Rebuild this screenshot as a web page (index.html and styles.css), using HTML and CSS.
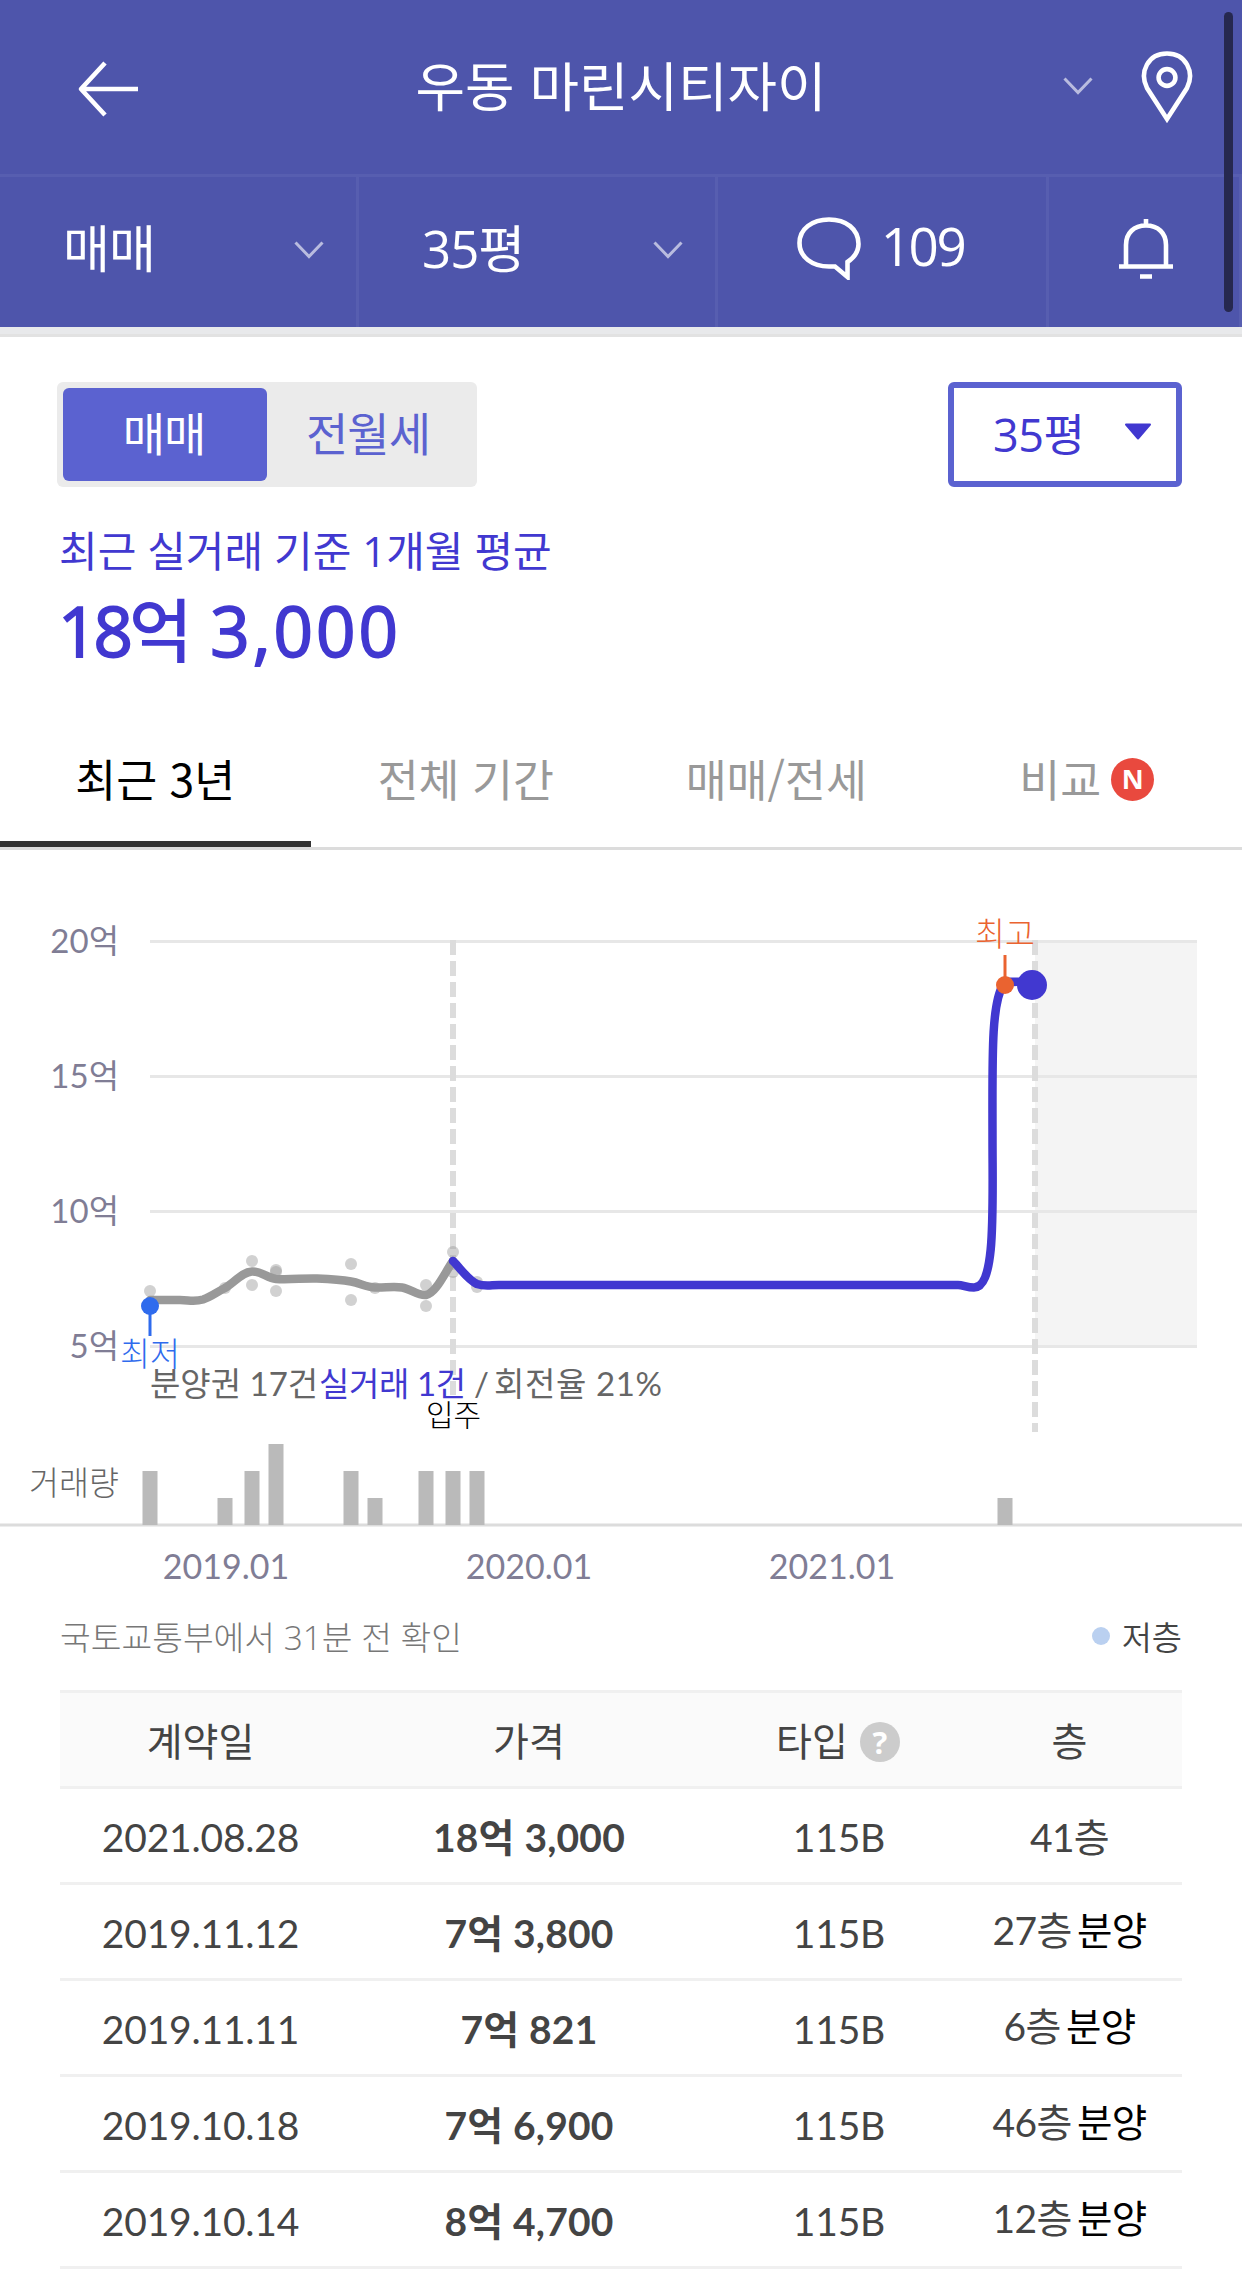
FILE: index.html
```
<!DOCTYPE html>
<html lang="ko">
<head>
    <meta charset="UTF-8">
    <meta name="viewport" content="width=device-width, initial-scale=1.0">
    <title>우동 마린시티자이</title>
    <link rel="stylesheet" href="styles.css">
</head>
<body>
    <header class="header">
        <div class="title-bar">
            <div class="title-left">
                <svg class="icon" width="62" height="58" viewBox="0 0 62 58" fill="none" stroke="#fff" stroke-width="4.6">
                    <path d="M61 29H4M28 3L4 29L28 55" stroke-linejoin="round"/>
                </svg>
            </div>
            <h1>우동 마린시티자이</h1>
            <div class="title-right">
                <svg class="chevron" width="30" height="18" viewBox="0 0 30 18"><path d="M1.5 1.5L15 15.5L28.5 1.5"/></svg>
                <svg class="icon" width="52" height="74" viewBox="0 0 52 74" fill="none" stroke="#fff" stroke-width="4.6">
                    <path d="M26 69L6 38C-2 22 7 3.5 26 3.5S54 22 46 38Z"/>
                    <circle cx="26" cy="27.5" r="8.4"/>
                </svg>
            </div>
        </div>
        <nav class="menu-bar">
            <div class="menu select">
                <span>매매</span>
                <svg class="chevron" width="30" height="18" viewBox="0 0 30 18"><path d="M1.5 1.5L15 15.5L28.5 1.5"/></svg>
            </div>
            <div class="menu select">
                <span>35평</span>
                <svg class="chevron" width="30" height="18" viewBox="0 0 30 18"><path d="M1.5 1.5L15 15.5L28.5 1.5"/></svg>
            </div>
            <div class="menu talk">
                <svg class="icon" width="64" height="64" viewBox="0 0 64 64" fill="none" stroke="#fff" stroke-width="4.6">
                    <path d="M32 50.5C15 50.5 2.5 41 2.5 27S15 3.5 32 3.5S61.5 13 61.5 28C61.5 35 58 41 50.5 46V61L38 50.5Z"/>
                </svg>
                <span>109</span>
            </div>
            <div class="menu bell">
                <svg class="icon" width="56" height="62" viewBox="0 0 56 62" fill="none" stroke="#fff" stroke-width="4.6">
                    <path d="M8 48V27C8 15 16 7.5 28 7.5S48 15 48 27V48M28 1V7M1 48.5H55M22 58.5H34"/>
                </svg>
            </div>
        </nav>
        <div class="scrollbar"></div>
    </header>

    <section class="summary">
        <div class="filter-row">
            <div class="segment">
                <button class="active">매매</button>
                <button>전월세</button>
            </div>
            <div class="size-select">
                <span>35평</span>
                <svg width="28" height="17" viewBox="0 0 28 17"><path d="M2 1.5H26L14 15.5Z" fill="#4138d0" stroke="#4138d0" stroke-width="2" stroke-linejoin="round"/></svg>
            </div>
        </div>
        <p class="basis">최근 실거래 기준 1개월 평균</p>
        <p class="price"><span class="eok">18</span>억 <span class="man">3,000</span></p>
    </section>

    <div class="tabs">
        <div class="tab on">최근 3년</div>
        <div class="tab">전체 기간</div>
        <div class="tab">매매/전세</div>
        <div class="tab">비교<span class="new">N</span></div>
    </div>

    <svg class="chart" width="1242" height="750" viewBox="0 850 1242 750">
        <!-- 예측 구간 -->
        <rect x="1035" y="941" width="162" height="406" fill="#f4f4f4"/>

        <g stroke="#e7e7e7" stroke-width="3">
            <path d="M150 941.5H1197M150 1076.5H1197M150 1211.5H1197M150 1346.5H1197"/>
        </g>
        <g stroke="#dcdcdc" stroke-width="6" stroke-dasharray="15 6">
            <path d="M453 940V1395"/>
            <path d="M1035 940V1432"/>
        </g>

        <g class="axis won-axis" text-anchor="end">
            <text x="119" y="953">20억</text>
            <text x="119" y="1088">15억</text>
            <text x="119" y="1223">10억</text>
            <text x="119" y="1357.5">5억</text>
        </g>

        <!-- 실거래 점 -->
        <g fill="#999" fill-opacity=".45">
            <circle cx="150" cy="1291" r="6"/>
            <circle cx="225" cy="1288" r="6"/>
            <circle cx="252" cy="1261" r="6"/>
            <circle cx="252" cy="1285" r="6"/>
            <circle cx="276" cy="1270" r="6"/>
            <circle cx="276" cy="1272" r="6"/>
            <circle cx="276" cy="1291" r="6"/>
            <circle cx="351" cy="1264" r="6"/>
            <circle cx="351" cy="1300" r="6"/>
            <circle cx="375" cy="1288" r="6"/>
            <circle cx="426" cy="1285" r="6"/>
            <circle cx="426" cy="1306" r="6"/>
            <circle cx="453" cy="1252" r="6"/>
            <circle cx="453" cy="1272" r="6"/>
            <circle cx="477" cy="1282" r="6"/>
            <circle cx="477" cy="1287" r="6"/>
        </g>

        <g fill="none" stroke-width="8.5" stroke-linecap="round">
            <path stroke="#999" d="M150 1300H180C189 1300 194 1302 203 1299.5C211 1297 217 1292 225 1288C234 1283 242 1272 252 1271.5C261 1271 267 1278 276 1279C290 1280 304 1278 317 1278.5C329 1279 340 1279.5 351 1281.5C360 1283 366 1287 375 1287.5C384 1288 393 1286 402 1287.5C411 1289 418 1296 426 1295C436 1293 444 1274 453 1261"/>
            <path stroke="#4138d0" d="M453 1261C461 1269 468 1280 477 1284C485 1287 491 1285 499 1285H958C963 1285 967 1287.5 974 1287.5C996 1287.5 992.5 1210 992.5 1136C992.5 1060 991 1005 1003 985C1007 980 1018 982 1032 982"/>
        </g>
        <path d="M150 1306V1336" stroke="#2f6bed" stroke-width="3"/>
        <circle cx="150" cy="1306" r="9" fill="#2f6bed"/>
        <path d="M1005 955V985" stroke="#ea6330" stroke-width="3"/>
        <circle cx="1005" cy="985" r="9" fill="#ea6330"/>
        <circle cx="1032" cy="985" r="15" fill="#4138d0"/>

        <text class="mark low" x="120" y="1366">최저</text>
        <text class="mark high" x="975" y="946">최고</text>
        <text class="count" x="150" y="1396">분양권 17건<tspan class="real" x="319">실거래 1건</tspan><tspan x="474">/</tspan><tspan class="turnover" x="494">회전율 21%</tspan></text>
        <text class="mark move-in" x="426" y="1426">입주</text>

        <!-- 거래량 -->
        <text class="mark volume" x="29" y="1495">거래량</text>
        <path d="M0 1525H1242" stroke="#dcdcdc" stroke-width="3"/>
        <g fill="#bababa">
            <rect x="142.5" y="1471" width="15" height="54"/>
            <rect x="217.5" y="1498" width="15" height="27"/>
            <rect x="244.5" y="1471" width="15" height="54"/>
            <rect x="268.5" y="1444" width="15" height="81"/>
            <rect x="343.5" y="1471" width="15" height="54"/>
            <rect x="367.5" y="1498" width="15" height="27"/>
            <rect x="418.5" y="1471" width="15" height="54"/>
            <rect x="445.5" y="1471" width="15" height="54"/>
            <rect x="469.5" y="1471" width="15" height="54"/>
            <rect x="997.5" y="1498" width="15" height="27"/>
        </g>
        <g class="axis" text-anchor="middle">
            <text x="226" y="1579">2019.01</text>
            <text x="529" y="1579">2020.01</text>
            <text x="832" y="1579">2021.01</text>
        </g>
    </svg>

    <section class="deals">
        <div class="notice">
            <span class="checked">국토교통부에서 31분 전 확인</span>
            <span class="legend"><i class="dot"></i>저층</span>
        </div>
        <table>
            <thead>
                <tr>
                    <th class="c-date">계약일</th>
                    <th class="c-price">가격</th>
                    <th class="c-type">타입<span class="help">?</span></th>
                    <th class="c-floor">층</th>
                </tr>
            </thead>
            <tbody>
                <tr><td>2021.08.28</td><td class="won">18억 3,000</td><td>115B</td><td class="floor">41층</td></tr>
                <tr><td>2019.11.12</td><td class="won">7억 3,800</td><td>115B</td><td class="floor presale">27층 <em>분양</em></td></tr>
                <tr><td>2019.11.11</td><td class="won">7억 821</td><td>115B</td><td class="floor presale">6층 <em>분양</em></td></tr>
                <tr><td>2019.10.18</td><td class="won">7억 6,900</td><td>115B</td><td class="floor presale">46층 <em>분양</em></td></tr>
                <tr><td>2019.10.14</td><td class="won">8억 4,700</td><td>115B</td><td class="floor presale">12층 <em>분양</em></td></tr>
            </tbody>
        </table>
    </section>
</body>
</html>
```
FILE: styles.css
```
* {
    box-sizing: border-box;
}
body {
    margin: 0;
    width: 1242px;
    height: 2273px;
    overflow: hidden;
    background: #fff;
    font-family: 'Noto Sans CJK KR', sans-serif;
    color: #444;
}
h1, p {
    margin: 0;
    font-weight: normal;
}
svg {
    display: block;
    flex-shrink: 0;
}

/* header */
.header {
    position: relative;
    height: 337px;
    background: #4e55ab;
    color: #fff;
    border-bottom: 3px solid #e2e2e2;
}
.title-bar {
    display: grid;
    grid-template-columns: 380px 1fr 380px;
    align-items: center;
    height: 177px;
    border-bottom: 3px solid #575eb0;
}
.title-bar h1 {
    padding-bottom: 6px;
    font-size: 53.8px;
    line-height: 60px;
    text-align: center;
    white-space: nowrap;
}
.title-left {
    padding: 4px 0 0 77px;
}
.title-right {
    display: flex;
    align-items: center;
    justify-content: flex-end;
    gap: 48px;
    padding-right: 49px;
}
.chevron {
    fill: none;
    stroke: #b9bcdf;
    stroke-width: 3;
}
.title-right .chevron {
    margin-bottom: 2px;
}
.menu-bar {
    display: flex;
    height: 157px;
    border-bottom: 7px solid #e8e9eb;
}
.menu {
    display: flex;
    align-items: center;
    border-right: 3px solid #575eb0;
    font-family: 'Open Sans', 'Noto Sans CJK KR', sans-serif;
    font-size: 51px;
    line-height: 60px;
    letter-spacing: -1px;
}
.menu span {
    padding-bottom: 9px;
}
.select {
    justify-content: space-between;
    width: 359px;
    padding: 0 32px 0 63px;
}
.select .chevron {
    margin-bottom: 5px;
}
.talk {
    justify-content: center;
    gap: 20px;
    width: 331px;
    padding-right: 3px;
    font-size: 53px;
    letter-spacing: -2.5px;
}
.talk svg {
    margin-bottom: 8px;
}
.talk span {
    padding-bottom: 13px;
}
.bell {
    justify-content: center;
    width: 193px;
}
.bell svg {
    margin: 0 0 6px 4px;
}
.scrollbar {
    position: absolute;
    top: 12px;
    right: 9px;
    width: 9px;
    height: 300px;
    border-radius: 5px;
    background: #26284f;
}

/* summary */
.summary {
    height: 375px;
    padding: 45px 60px 0 57px;
}
.filter-row {
    display: flex;
    justify-content: space-between;
}
.segment {
    display: flex;
    width: 420px;
    height: 105px;
    padding: 6px;
    border-radius: 6px;
    background: #ebebeb;
}
.segment button {
    flex: 1;
    padding: 0 2px 8px 0;
    border: 0;
    border-radius: 6px;
    background: none;
    color: #5b62d0;
    font: 46px/1 'Noto Sans CJK KR', sans-serif;
    letter-spacing: -1px;
}
.segment .active {
    background: #5b62d0;
    color: #fff;
}
.size-select {
    display: flex;
    align-items: center;
    justify-content: space-between;
    width: 234px;
    height: 105px;
    padding: 0 24px 0 39px;
    border: 6px solid #5b62d0;
    border-radius: 6px;
    color: #4138d0;
    font-family: 'Open Sans', 'Noto Sans CJK KR', sans-serif;
    font-size: 45px;
    line-height: 60px;
    letter-spacing: -.5px;
}
.size-select svg {
    margin-bottom: 6px;
}
.basis {
    padding: 38px 0 0 2px;
    color: #4138d0;
    font-family: 'Open Sans', 'Noto Sans CJK KR', sans-serif;
    font-size: 42px;
    line-height: 52px;
}
.price {
    padding: 17px 0 0 1px;
    color: #4138d0;
    font-family: 'Open Sans', 'Noto Sans CJK KR', sans-serif;
    font-size: 69px;
    font-weight: 500;
    line-height: 72px;
}
.eok,
.man {
    -webkit-text-stroke: 1.8px #4138d0;
}
.eok {
    letter-spacing: -4px;
}
.man {
    letter-spacing: 3px;
}

/* tabs */
.tabs {
    display: flex;
    height: 138px;
    border-bottom: 3px solid #dcdcdc;
}
.tab {
    display: flex;
    align-items: center;
    justify-content: center;
    flex: 1;
    padding-bottom: 4px;
    color: #999;
    font-size: 44.5px;
    line-height: 60px;
}
.tab.on {
    border-bottom: 6px solid #333;
    padding-top: 2px;
    padding-bottom: 0;
    color: #000;
}
.new {
    width: 43px;
    height: 43px;
    margin: 3px 0 0 10px;
    border-radius: 50%;
    background: #e9493e;
    color: #fff;
    font: bold 27px/42px 'Open Sans', sans-serif;
    text-align: center;
}

/* chart */
.chart text {
    font-family: Lato, 'Noto Sans CJK KR', sans-serif;
}
.chart .axis text {
    font-size: 34px;
    fill: #807d95;
}
.chart .won-axis text {
    font-size: 33px;
}
.chart .mark {
    font-size: 32.6px;
    font-weight: 300;
}
.chart .low {
    fill: #2f6bed;
}
.chart .high {
    fill: #ea6330;
}
.chart .move-in {
    font-size: 30px;
    fill: #000;
}
.chart .volume {
    fill: #666;
}
.chart .count {
    font-size: 33px;
    fill: #666;
}
.chart .real {
    fill: #4138d0;
    letter-spacing: -.4px;
}
.chart .turnover {
    letter-spacing: .6px;
}

/* deals */
.deals {
    padding: 0 60px;
}
.notice {
    display: flex;
    justify-content: space-between;
    align-items: center;
    height: 90px;
    padding-bottom: 18px;
}
.checked {
    padding-bottom: 2px;
    color: #777;
    font-family: 'Open Sans', 'Noto Sans CJK KR', sans-serif;
    font-size: 33.4px;
    font-weight: 300;
}
.legend {
    display: flex;
    align-items: center;
    padding-bottom: 1px;
    font-size: 32.8px;
    font-weight: 350;
}
.dot {
    width: 18px;
    height: 18px;
    margin-right: 12px;
    border-radius: 50%;
    background: #bad0f0;
}
table {
    width: 1122px;
    table-layout: fixed;
    border-collapse: separate;
    border-spacing: 0;
    border-top: 3px solid #f0f0f0;
}
th, td {
    height: 96px;
    padding: 0;
    border-bottom: 3px solid #f0f0f0;
    font-size: 39px;
    font-weight: normal;
    line-height: 50px;
    text-align: center;
    white-space: nowrap;
}
th {
    padding-bottom: 2px;
    background: #fafafa;
}
td {
    padding-top: 2px;
    font-family: Lato, 'Noto Sans CJK KR', sans-serif;
    letter-spacing: -.2px;
}
.c-date {
    width: 281px;
}
.c-price {
    width: 376px;
}
.c-type {
    width: 244px;
    padding-right: 2px;
}
.c-floor, .floor {
    padding-right: 4px;
}
.floor {
    letter-spacing: -.7px;
}
.won {
    font-weight: bold;
    letter-spacing: .2px;
}
.presale {
    padding-top: 0;
    padding-bottom: 4px;
}
.presale em {
    margin-left: -4px;
    color: #000;
    font-size: 38.5px;
    font-style: normal;
}
.help {
    display: inline-block;
    width: 40px;
    height: 40px;
    margin-left: 12px;
    border-radius: 50%;
    background: #ccc;
    color: #fff;
    font: bold 31px/40px 'Open Sans', sans-serif;
    vertical-align: 2px;
}
```
